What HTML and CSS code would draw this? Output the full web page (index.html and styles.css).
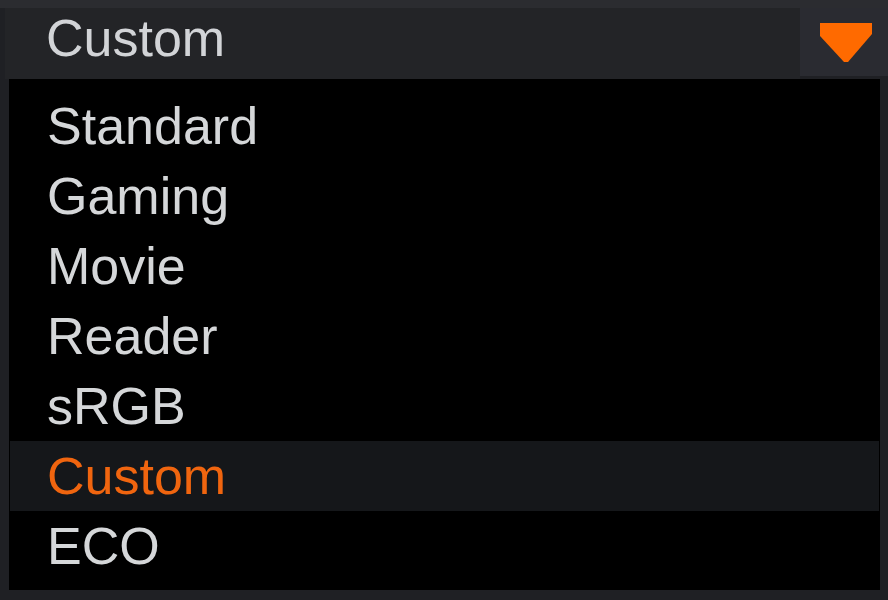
FILE: index.html
```html
<!DOCTYPE html>
<html lang="en">

<head>
  <meta charset="UTF-8">
  <title>Picture Mode</title>
  <link rel="stylesheet" href="styles.css">
</head>

<body>
  <div class="select">
    <div class="head">
      <div class="current">Custom</div>
      <div class="arrow">
        <svg width="52" height="40" viewBox="0 0 52 40">
          <polygon points="0,0 52,0 52,11 28,39 24,39 0,13" fill="#ff6a00" />
        </svg>
      </div>
    </div>
    <ul class="list">
      <li>Standard</li>
      <li>Gaming</li>
      <li>Movie</li>
      <li>Reader</li>
      <li>sRGB</li>
      <li class="active">Custom</li>
      <li>ECO</li>
    </ul>
  </div>
</body>

</html>
```

FILE: styles.css
```css
body,html{
  height:100%;
}
body {
  margin: 0;
  padding: 0;
  font-family: 'Liberation Sans', Arial, sans-serif;
  background-color: #1f2024;
}

.select {
  padding-top: 8px;
  background: linear-gradient(#2b2c30 0, #2b2c30 8px, transparent 8px);
}

.head {
  display: flex;
  height: 71px;
  margin-left: 5px;
}

.current {
  flex: 1;
  background-color: #232427;
  color: #d2d4d7;
  font-size: 52px;
  line-height: 60px;
  padding-left: 41px;
}

.arrow {
  width: 88px;
  height: 68px;
  background-color: #2a2b31;
  display: flex;
  justify-content: center;
  padding: 15px 0 0 4px;
  box-sizing: border-box;
}

.list {
  list-style: none;
  margin: 0 8px 0 9px;
  padding: 12px 0 9px;
  background-color: #000;
}

.list li {
  font-size: 52px;
  line-height: 70px;
  color: #d5d7d9;
  padding-left: 38px;
}

.list .active {
  background-color: #15171a;
  color: #f0650f;
  margin: 0 1px;
  padding-left: 37px;
}
```
